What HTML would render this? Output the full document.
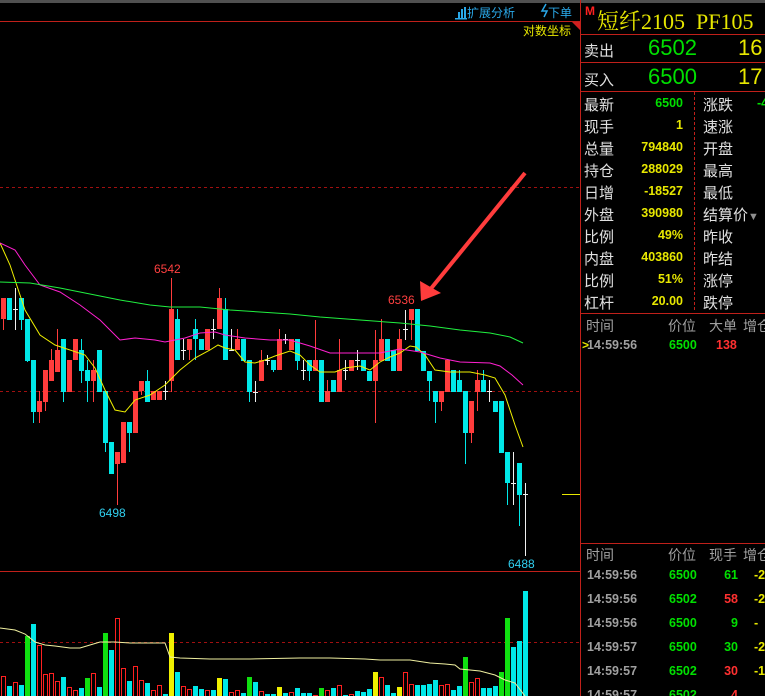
<!DOCTYPE html>
<html><head><meta charset="utf-8">
<style>
html,body{margin:0;padding:0;background:#000;width:765px;height:696px;overflow:hidden;font-family:"Liberation Sans","Noto Sans CJK SC",sans-serif}
#root{position:relative;width:765px;height:696px}
.t{position:absolute;white-space:nowrap}
.w{color:#e0e0e0}.g{color:#00e000}.y{color:#e8e800}.r{color:#ff3030}.gr{color:#a0a0a0}
.lab{font-size:15px;color:#e0e0e0}
.num{font-size:12.5px;font-weight:bold;text-align:right}
</style></head><body><div id="root">
<svg id="s" width="765" height="696" style="position:absolute;left:0;top:0" xmlns="http://www.w3.org/2000/svg"></svg>
<div class="t" style="left:467px;top:4px;font-size:12px;color:#2aa8e8">扩展分析</div>
<div class="t" style="left:548px;top:4px;font-size:12px;color:#2aa8e8">下单</div>
<div class="t" style="left:523px;top:22px;font-size:12px;color:#e8e800">对数坐标</div>
<div class="t" style="left:154px;top:262px;font-size:12px;color:#ff4040">6542</div>
<div class="t" style="left:388px;top:293px;font-size:12px;color:#ff4040">6536</div>
<div class="t" style="left:99px;top:506px;font-size:12px;color:#30d0f0">6498</div>
<div class="t" style="left:508px;top:557px;font-size:12px;color:#30d0f0">6488</div>

<div class="t" style="left:585px;top:4px;font-size:12px;color:#ff2020;font-weight:bold">M</div>
<div class="t" style="left:597px;top:5px;font-size:22px;color:#e8e800;font-family:'Liberation Serif','Noto Serif CJK SC',serif">短纤2105&nbsp;&nbsp;PF105</div>
<div class="t lab" style="left:584px;top:40px">卖出</div>
<div class="t g" style="left:648px;top:35px;font-size:22px">6502</div>
<div class="t y" style="left:738px;top:35px;font-size:22px">16</div>
<div class="t lab" style="left:584px;top:69px">买入</div>
<div class="t g" style="left:648px;top:64px;font-size:22px">6500</div>
<div class="t y" style="left:738px;top:64px;font-size:22px">17</div>
<div id="stats"></div>
<div class="t gr" style="left:586px;top:316px;font-size:14px">时间</div>
<div class="t gr" style="left:668px;top:316px;font-size:14px">价位</div>
<div class="t gr" style="left:709px;top:316px;font-size:14px">大单</div>
<div class="t gr" style="left:743px;top:316px;font-size:14px">增仓</div>
<div class="t" style="left:582px;top:338px;font-size:12px;color:#e8e800;font-weight:bold">&gt;</div>
<div class="t gr" style="left:587px;top:338px;font-size:12.5px;font-weight:bold">14:59:56</div>
<div class="t g" style="left:669px;top:338px;font-size:12.5px;font-weight:bold">6500</div>
<div class="t r" style="left:716px;top:338px;font-size:12.5px;font-weight:bold">138</div>
<div class="t gr" style="left:586px;top:545px;font-size:14px">时间</div>
<div class="t gr" style="left:668px;top:545px;font-size:14px">价位</div>
<div class="t gr" style="left:709px;top:545px;font-size:14px">现手</div>
<div class="t gr" style="left:743px;top:545px;font-size:14px">增仓</div>
<div id="ticks"></div>
</div>
<script>
var S=document.getElementById('s'),h='';
function L(x1,y1,x2,y2,c,w,d){h+='<line x1="'+x1+'" y1="'+y1+'" x2="'+x2+'" y2="'+y2+'" stroke="'+c+'" stroke-width="'+(w||1)+'"'+(d?' stroke-dasharray="'+d+'"':'')+'/>';}
function R(x,y,w,hh,f,s){h+='<rect x="'+x+'" y="'+y+'" width="'+w+'" height="'+hh+'" fill="'+f+'"'+(s?' stroke="'+s+'"':'')+'/>';}
function P(pts,c){h+='<polyline fill="none" stroke="'+c+'" stroke-width="1" points="'+pts+'"/>';}
R(0,0,765,3,'#505050');
L(0,21.5,580,21.5,'#c0201a');
L(0,187.5,580,187.5,'#a01010',1,'3,3');
L(0,391.5,580,391.5,'#a01010',1,'3,3');
L(0,571.5,580,571.5,'#c0201a');
L(0,642.5,580,642.5,'#a01010',1,'3,3');
L(580.5,0,580.5,696,'#c0201a');
h+='<polygon points="572,22 580,22 580,30" fill="#d02020"/>';
L(562,494.5,580,494.5,'#e8e800');
R(458,12,2,7,'#2aa8e8');R(461,9,2,10,'#2aa8e8');R(464,7,2,12,'#2aa8e8');R(455,18,12,1.5,'#2aa8e8');
h+='<path d="M546 4 L542 11 L547 11 L544 17" stroke="#2aa8e8" fill="none" stroke-width="1.5"/>';
L(581,34.5,765,34.5,'#c0201a');L(581,62.5,765,62.5,'#c0201a');L(581,91.5,765,91.5,'#c0201a');
L(694.5,92,694.5,312,'#c0201a',1,'3,2');
L(581,313.5,765,313.5,'#c0201a');L(581,543.5,765,543.5,'#c0201a');
var C=[['r',298,319,298,330],['c',298,320],['w',309,309,288,330],['c',298,320,298,330],['c',319,361,319,362],['c',360,412,360,423],['r',401,412,391,423],['r',370,402,370,411],['r',360,381,349,381],['r',350,372,329,372],['c',339,392,339,402],['r',360,392],['r',339,360,339,360],['c',350,371,339,383],['c',370,381,360,402],['r',370,381,360,402],['c',350,392],['c',391,443,391,452],['c',442,474],['r',452,464,452,505],['r',422,463],['c',422,433,422,452],['r',391,433],['r',381,391,381,395],['c',381,402,370,402],['r',391,400],['r',391,400],['w',391,391,381,400],['r',309,381,278,392],['c',319,360,309,360],['w',350,350,339,360],['r',339,350,339,360],['c',329,339,319,360],['c',339,350],['r',329,350],['w',329,329,319,339],['r',298,329,288,329],['c',309,360,298,360],['w',350,350,329,350],['r',339,350,329,350],['c',339,361],['c',360,392,360,402],['w',392,392,381,402],['r',360,381,350,381],['w',360,360,355,365],['c',360,370,360,372],['r',339,370,329,370],['w',339,339,334,344],['r',339,350],['c',339,361,339,370],['w',370,370,360,380],['c',360,371,360,381],['r',360,371,320,371],['c',360,402],['r',391,402,380,402],['c',380,392],['r',370,392,339,392],['w',370,370,360,380],['r',360,371],['w',360,360,350,370],['c',360,371],['c',371,381],['r',360,381,330,423],['r',339,361,319,361],['c',339,361],['c',350,371],['r',339,371,329,371],['w',329,329,310,340],['r',309,320,309,340],['c',309,351,309,351],['c',351,371,351,371],['c',371,381,371,401],['c',391,402,391,423],['r',391,402,391,411],['r',360,392],['c',370,392,370,392],['c',380,392,370,392],['c',391,433,391,464],['r',401,433,401,443],['r',380,392,370,411],['c',380,392,370,392],['w',391,391,380,402],['c',401,412],['c',401,453,401,453],['c',452,483,452,505],['w',483,483,452,505],['c',463,495,463,526],['w',494,494,483,556]];
var col={r:'#ff3c3c',c:'#00e8e8',w:'#f0f0f0'};
C.forEach(function(k,i){var x=1+i*6,c=col[k[0]];var wt=k[3]||k[1],wb=k[4]||k[2];
 if(wt<k[1]||wb>k[2])L(x+2.5,wt,x+2.5,wb,c);
 if(k[0]=='w')L(x,k[1]+.5,x+5,k[1]+.5,c);else R(x,k[1],5,Math.max(1,k[2]-k[1]),c);});
P('0,243 10,265 25,310 40,335 55,345 70,350 85,355 95,368 105,390 115,410 125,412 135,400 150,395 165,385 180,370 195,358 210,350 218,345 225,348 235,350 245,362 255,363 265,360 275,356 290,351 300,355 310,365 320,372 335,372 345,368 360,366 370,370 380,362 390,357 400,353 410,346 416,347 425,355 435,370 450,372 470,372 485,375 495,378 505,395 515,425 523,447','#f0f000');
P('0,243 15,250 25,265 40,285 60,292 80,305 100,320 120,340 135,338 155,340 165,342 185,338 200,333 215,332 225,335 245,338 270,340 290,340 310,346 330,353 350,353 380,353 400,349 420,352 440,358 460,362 490,363 500,366 512,375 523,385','#ff20d0');
P('0,282 30,283 60,288 90,294 120,300 150,305 170,307 200,307 230,310 260,312 290,314 320,317 360,320 400,323 430,326 460,330 490,333 510,337 523,343','#20f040');
L(525,173,429,291,'#ff3c3c',4);
h+='<polygon points="421,301 420,281 441,293" fill="#ff3c3c"/>';
var V=[['r',676],['c',686],['r',682],['c',685],['g',636],['c',624],['r',645],['r',674],['r',673],['r',681],['c',677],['r',687],['r',690],['c',688],['g',678],['r',673],['c',687],['g',633],['c',650],['r',618],['r',668],['c',681],['r',666],['r',680],['c',683],['r',690],['r',685],['c',694],['y',633],['c',672],['r',686],['r',689],['c',686],['c',689],['r',690],['c',690],['y',678],['c',679],['r',692],['r',690],['c',693],['g',677],['c',682],['r',691],['c',694],['c',694],['y',687],['c',693],['r',692],['c',688],['c',693],['c',693],['r',695],['g',688],['r',690],['c',688],['r',685],['c',695],['r',694],['c',691],['c',692],['c',689],['y',672],['r',677],['c',685],['c',693],['y',687],['r',672],['r',684],['c',685],['c',685],['c',684],['c',680],['r',685],['r',684],['c',690],['c',686],['g',657],['r',682],['r',678],['c',688],['c',688],['c',686],['g',672],['g',618],['c',647],['c',641],['c',591]];
var vc={c:'#00e8e8',g:'#10e010',y:'#f0f000'};
V.forEach(function(k,i){var x=1+i*6;if(k[0]=='r')R(x+.5,k[1]+.5,4,696-k[1],'none','#ff2020');else R(x,k[1],5,696-k[1],vc[k[0]]);});
P('0,628 15,630 25,634 35,642 45,645 55,646 70,648 80,648 90,645 100,642 115,642 130,643 150,643 165,643 170,657 180,658 210,659 250,659 300,658 330,658 365,659 380,660 410,660 430,663 445,664 455,665 460,669 480,671 495,675 505,680 515,683 525,696','#f0f0a0');
S.innerHTML=h;
var st=[['最新','6500','g','涨跌'],['现手','1','y','速涨'],['总量','794840','y','开盘'],['持仓','288029','y','最高'],['日增','-18527','y','最低'],['外盘','390980','y','结算价<span style="color:#909090;font-size:11px">▼</span>'],['比例','49%','y','昨收'],['内盘','403860','y','昨结'],['比例','51%','y','涨停'],['杠杆','20.00','y','跌停']];
var sh='';st.forEach(function(r,i){var y=94+i*22;
sh+='<div class="t lab" style="left:584px;top:'+y+'px">'+r[0]+'</div><div class="t num '+r[2]+'" style="left:620px;width:63px;top:'+(y+2)+'px">'+r[1]+'</div><div class="t lab" style="left:703px;top:'+y+'px">'+r[3]+'</div>';});
sh+='<div class="t num g" style="left:757px;top:96px">-4</div>';
document.getElementById('stats').innerHTML=sh;
var tk=[['14:59:56','6500','61','g','-2'],['14:59:56','6502','58','r','-2'],['14:59:56','6500','9','g','-'],['14:59:57','6500','30','g','-2'],['14:59:57','6502','30','r','-1'],['14:59:57','6502','4','r','']];
var th='';tk.forEach(function(r,i){var y=568+i*24;
th+='<div class="t gr" style="left:587px;top:'+y+'px;font-size:12.5px;font-weight:bold">'+r[0]+'</div><div class="t g" style="left:669px;top:'+y+'px;font-size:12.5px;font-weight:bold">'+r[1]+'</div><div class="t num '+r[3]+'" style="left:700px;width:38px;top:'+y+'px">'+r[2]+'</div><div class="t y" style="left:754px;top:'+y+'px;font-size:12.5px;font-weight:bold">'+r[4]+'</div>';});
document.getElementById('ticks').innerHTML=th;
</script>
</body></html>
